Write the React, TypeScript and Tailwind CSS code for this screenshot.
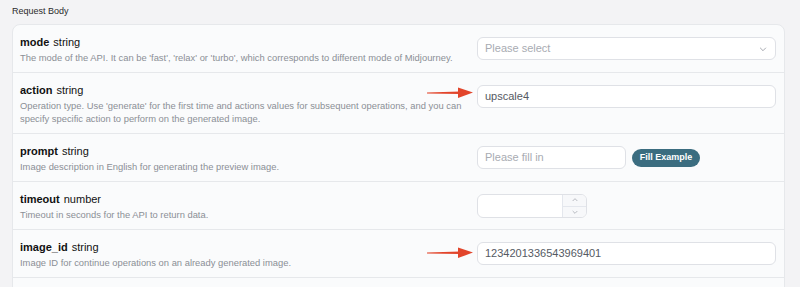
import React from 'react';

type Field = {
  name: string;
  type: string;
  desc: string;
  kind: 'select' | 'text' | 'prompt' | 'number';
  value?: string;
  placeholder?: string;
  arrow?: 'high' | 'mid';
};

const fields: Field[] = [
  {
    name: 'mode',
    type: 'string',
    desc: "The mode of the API. It can be 'fast', 'relax' or 'turbo', which corresponds to different mode of Midjourney.",
    kind: 'select',
    placeholder: 'Please select',
  },
  {
    name: 'action',
    type: 'string',
    desc: "Operation type. Use 'generate' for the first time and actions values for subsequent operations, and you can specify specific action to perform on the generated image.",
    kind: 'text',
    value: 'upscale4',
    arrow: 'high',
  },
  {
    name: 'prompt',
    type: 'string',
    desc: 'Image description in English for generating the preview image.',
    kind: 'prompt',
    placeholder: 'Please fill in',
  },
  {
    name: 'timeout',
    type: 'number',
    desc: 'Timeout in seconds for the API to return data.',
    kind: 'number',
  },
  {
    name: 'image_id',
    type: 'string',
    desc: 'Image ID for continue operations on an already generated image.',
    kind: 'text',
    value: '1234201336543969401',
    arrow: 'mid',
  },
];

const RedArrow = ({ high }: { high: boolean }) => (
  <svg
    width="48"
    height="12"
    viewBox="0 0 48 12"
    className={`absolute left-[-50px] ${high ? 'top-[2px]' : 'top-[5px]'}`}
  >
    <polygon points="0,5.4 33,4.4 33,6.9 0,6.5" fill="#e2452b" />
    <polygon points="31,0.5 46,5.6 31,11" fill="#e2452b" />
  </svg>
);

const Chevron = ({ up = false, size = 10 }: { up?: boolean; size?: number }) => (
  <svg width={size} height={size} viewBox="0 0 12 12" fill="none" stroke="#a8abb2" strokeWidth="1.2">
    <path d={up ? 'M2.5 7.5 L6 4 L9.5 7.5' : 'M2.5 4.5 L6 8 L9.5 4.5'} />
  </svg>
);

const Control = ({ f }: { f: Field }) => {
  const box = 'h-[23px] bg-white border border-[#dfe1e6] rounded-[6px] flex items-center px-[7px] text-[11px]';
  if (f.kind === 'select') {
    return (
      <div className={`${box} justify-between`}>
        <span className="text-[#a8abb2]">{f.placeholder}</span>
        <Chevron />
      </div>
    );
  }
  if (f.kind === 'prompt') {
    return (
      <div className="flex items-center gap-[6px]">
        <div className={`${box} w-[149px]`}>
          <span className="text-[#a8abb2]">{f.placeholder}</span>
        </div>
        <button className="h-[18px] w-[68px] rounded-full bg-[#3b6d80] text-white text-[9px] font-bold leading-none">
          Fill Example
        </button>
      </div>
    );
  }
  if (f.kind === 'number') {
    return (
      <div className="h-[24px] w-[110px] bg-white border border-[#dfe1e6] rounded-[6px] flex overflow-hidden">
        <div className="flex-1" />
        <div className="w-[24px] flex flex-col border-l border-[#e4e7ed] bg-[#f7f8fa]">
          <div className="flex-1 flex items-center justify-center border-b border-[#e4e7ed]">
            <Chevron up size={8} />
          </div>
          <div className="flex-1 flex items-center justify-center">
            <Chevron size={8} />
          </div>
        </div>
      </div>
    );
  }
  return (
    <div className="relative">
      {f.arrow && <RedArrow high={f.arrow === 'high'} />}
      <div className={box}>
        <span className="text-[#555a63]">{f.value}</span>
      </div>
    </div>
  );
};

export default function App() {
  return (
    <div
      className="w-[800px] h-[287px] overflow-hidden bg-[#f3f3f5] pl-[12px] pr-[15px]"
      style={{ fontFamily: '"Liberation Sans", Arial, sans-serif' }}
    >
      <div className="h-[24px] flex items-center text-[9px] font-medium text-[#2b2b2b]">Request Body</div>
      <div className="bg-[#fafbfc] border border-[#e6e8eb] rounded-[8px]">
        {fields.map((f, i) => (
          <div key={f.name} className={`flex ${i > 0 ? 'border-t border-[#e6e8eb]' : ''}`}>
            <div className="flex-1 pl-[7px] pr-[2px] pt-[9px] pb-[8px]">
              <div className="text-[11px] leading-[17px] text-[#111]">
                <span className="font-bold">{f.name}</span>
                <span className="ml-[4px]">{f.type}</span>
              </div>
              <p className="text-[9.4px] leading-[13px] text-[#8b8f96]">{f.desc}</p>
            </div>
            <div className="w-[313px] pl-[6px] pr-[8px] pt-[12px]">
              <Control f={f} />
            </div>
          </div>
        ))}
        <div className="h-[20px] border-t border-[#e6e8eb]" />
      </div>
    </div>
  );
}
